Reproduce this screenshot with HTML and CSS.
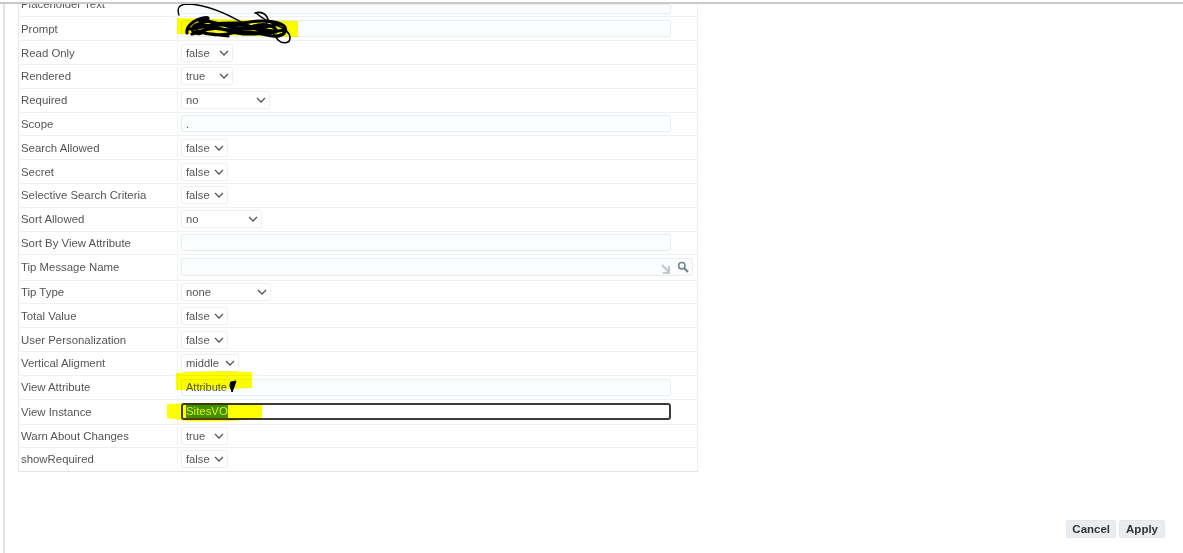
FILE: index.html
```html
<!DOCTYPE html>
<html lang="en">
<head>
<meta charset="utf-8">
<title>Properties</title>
<link rel="stylesheet" href="styles.css">
</head>
<body>
<div class="topline"></div>
<div class="page">
  <div class="panel">
    <div class="props">
      <div class="row clipped"><label>Placeholder Text</label><div class="cell"><input class="text" type="text"></div></div>
      <div class="row first"><label>Prompt</label><div class="cell"><input class="text" type="text"></div></div>
      <div class="row"><label>Read Only</label><div class="cell"><select class="w51"><option>false</option></select></div></div>
      <div class="row"><label>Rendered</label><div class="cell"><select class="w52"><option>true</option></select></div></div>
      <div class="row"><label>Required</label><div class="cell"><select class="w89"><option>no</option></select></div></div>
      <div class="row"><label>Scope</label><div class="cell"><input class="text" type="text" value="."></div></div>
      <div class="row"><label>Search Allowed</label><div class="cell"><select class="w47"><option>false</option></select></div></div>
      <div class="row"><label>Secret</label><div class="cell"><select class="w47"><option>false</option></select></div></div>
      <div class="row"><label>Selective Search Criteria</label><div class="cell"><select class="w47"><option>false</option></select></div></div>
      <div class="row"><label>Sort Allowed</label><div class="cell"><select class="w81"><option>no</option></select></div></div>
      <div class="row"><label>Sort By View Attribute</label><div class="cell"><input class="text" type="text"></div></div>
      <div class="row tall"><label>Tip Message Name</label><div class="cell">
        <div class="lov">
          <svg class="lov-arrow" width="10" height="10" viewBox="0 0 10 10"><path d="M1 1 L8 8 M8 2 V9 H2" fill="none" stroke="#c4c7c9" stroke-width="2"/></svg>
          <svg class="lov-search" width="12" height="12" viewBox="0 0 12 12"><circle cx="4.8" cy="4.8" r="3.2" fill="none" stroke="#6d8191" stroke-width="1.5"/><path d="M7.3 7.3 L11 11" stroke="#6d8191" stroke-width="2"/></svg>
        </div>
      </div></div>
      <div class="row"><label>Tip Type</label><div class="cell"><select class="w90"><option>none</option></select></div></div>
      <div class="row"><label>Total Value</label><div class="cell"><select class="w47"><option>false</option></select></div></div>
      <div class="row"><label>User Personalization</label><div class="cell"><select class="w47"><option>false</option></select></div></div>
      <div class="row"><label>Vertical Aligment</label><div class="cell"><select class="w58"><option>middle</option></select></div></div>
      <div class="row"><label>View Attribute</label><div class="cell"><input class="text" type="text" value="Attribute"></div></div>
      <div class="row tall"><label>View Instance</label><div class="cell"><div class="focused"><span class="selected">SitesVO</span></div></div></div>
      <div class="row short"><label>Warn About Changes</label><div class="cell"><select class="w47"><option>true</option></select></div></div>
      <div class="row last"><label>showRequired</label><div class="cell"><select class="w47"><option>false</option></select></div></div>
    </div>
    <div class="actions">
      <button class="btn btn-cancel" type="button">Cancel</button>
      <button class="btn" type="button">Apply</button>
    </div>
  </div>
</div>
<svg class="ink" width="1183" height="553" viewBox="0 0 1183 553" aria-hidden="true">
  <g class="marker">
    <path d="M177 18 L298 21 L298 37 L177 34 Z"/>
    <path d="M176 373 Q210 370 252 372 L252 388 Q215 390 176 390 Z"/>
    <path d="M167 404 Q210 402 262 404 L262 418 Q225 423 186 421 L167 418 Z"/>
  </g>
  <path class="scrawl thin" d="M179 15 C177 9 178 4 188 4 C208 5 228 14 246 25"/>
  <path class="scrawl thick" d="M187 33 C186 26 194 20 203 18 C212 16 208 22 198 24 C192 26 190 31 196 33 C204 36 204 26 214 24 C226 22 240 24 250 22 C262 20 278 21 284 26 C288 31 284 37 272 36 C258 33 244 30 232 33 C222 36 208 35 198 31 C192 28 204 22 218 28 C232 33 246 28 258 25 C268 23 278 28 276 32 C262 34 240 36 226 30 C214 26 204 30 192 34 M200 21 C212 20 222 26 236 28 C250 30 262 28 280 24 M190 29 C206 26 226 22 248 26 C262 29 274 33 284 30 M212 34 L228 36 M244 24 L268 34"/>
  <path class="scrawl mid" d="M255 13 C261 11 267 14 268 20 L266 24 M256 13 C262 18 268 22 276 25 C284 28 290 32 290 38 C290 44 282 44 278 40 C275 36 274 33 270 30"/>
  <path class="scrawl cursor" d="M231 382 L236 381 L234 387 L232 392 L230 386 Z"/>
  <path class="squiggle" d="M186 419 q1.5 -1.5 3 0 t3 0 t3 0 t3 0 t3 0 t3 0 t3 0 t3 0 t3 0 t3 0 t3 0 t3 0 t3 0 t3 0"/>
</svg>
</body>
</html>
```

FILE: styles.css
```css
* { box-sizing: border-box; }
html, body { margin: 0; padding: 0; height: 553px; overflow: hidden; background: #fff; }
body { font-family: "Liberation Sans", Arial, sans-serif; font-size: 11.4px; color: #555; position: relative; }

.topline { height: 4px; background: linear-gradient(#fff 0 2px, #c9c9c9 2px); position: relative; z-index: 1; }
.page { height: 549px; margin-left: 3px; border-left: 2px solid #dfe5ee; padding-left: 13px; overflow: hidden; filter: blur(0.35px); }
.panel { display: flex; flex-direction: column; height: 549px; }

.props { width: 680px; border-left: 1px solid #e6ebee; border-right: 1px solid #eef1f3; border-bottom: 1px solid #dfe4e8; }
.row { display: grid; grid-template-columns: 158px 1fr; height: 23.8px; border-top: 1px solid #eef1f3; align-items: center; }
.row.tall { height: 25.2px; }
.row.short { height: 23.2px; }
.row.first { border-top: 1px solid #eef1f3; }
.row.clipped { height: 12.4px; border-top: 0; overflow: hidden; align-items: start; }
.row.clipped label { display: block; margin-top: -6px; }
.row label { padding-left: 2px; white-space: nowrap; }
.cell { height: 100%; border-left: 1px solid #f1f3f5; padding-left: 3px; display: flex; align-items: center; }

.text { width: 490px; height: 17px; border: 1px solid #e8edf0; border-radius: 2px; background: #fafcfd; font: 11px "Liberation Sans", Arial, sans-serif; color: #555; padding: 0 4px; outline: 0; }
.row.clipped .text { height: 10px; align-self: start; }

select {
  appearance: none;
  height: 18px;
  border: 1px solid #edf0f2;
  border-radius: 2px;
  background: #fff url("data:image/svg+xml,%3Csvg xmlns='http://www.w3.org/2000/svg' width='10' height='6'%3E%3Cpath d='M1 1l4 4 4-4' fill='none' stroke='%23555' stroke-width='1.3'/%3E%3C/svg%3E") no-repeat right 3px center;
  font: 11.2px "Liberation Sans", Arial, sans-serif;
  color: #555;
  padding: 0 0 0 4px;
  outline: 0;
}
.w47 { width: 47px; } .w51 { width: 52px; } .w52 { width: 52px; }
.w58 { width: 58px; } .w81 { width: 81px; } .w89 { width: 89px; } .w90 { width: 90px; }

.lov { width: 512px; height: 18px; border: 1px solid #e8edf0; border-radius: 2px; background: #fafcfd; display: flex; align-items: center; justify-content: flex-end; gap: 6px; padding-right: 3px; }
.lov-arrow { margin-top: 3px; }

.focused { width: 490px; height: 17px; border: 2px solid #3c3c3c; border-radius: 3px; background: #fff; display: flex; align-items: center; padding-left: 3px; font-size: 11.4px; }
.selected { background: #3f8f2f; color: #e6f59a; line-height: 13px; }

.actions { margin-top: auto; display: flex; justify-content: flex-end; gap: 3px; padding: 0 18px 15px 0; }
.btn { height: 18px; padding: 0 6px; border: 1px solid #e3e7ea; border-radius: 2px; background: #e9edf0; color: #333; font: bold 11.5px "Liberation Sans", Arial, sans-serif; }
.btn-cancel { padding: 0 5px; }

.ink { position: absolute; left: 0; top: 0; pointer-events: none; }
.marker { fill: #ffff00; mix-blend-mode: multiply; }
.scrawl { fill: none; stroke: #000; stroke-linecap: round; stroke-linejoin: round; }
.thin { stroke-width: 1.4; }
.thick { stroke-width: 3.2; }
.mid { stroke-width: 1.6; }
.cursor { fill: #000; stroke-width: 1; }
.squiggle { fill: none; stroke: #b33; stroke-width: 0.8; opacity: 0.7; }
```
